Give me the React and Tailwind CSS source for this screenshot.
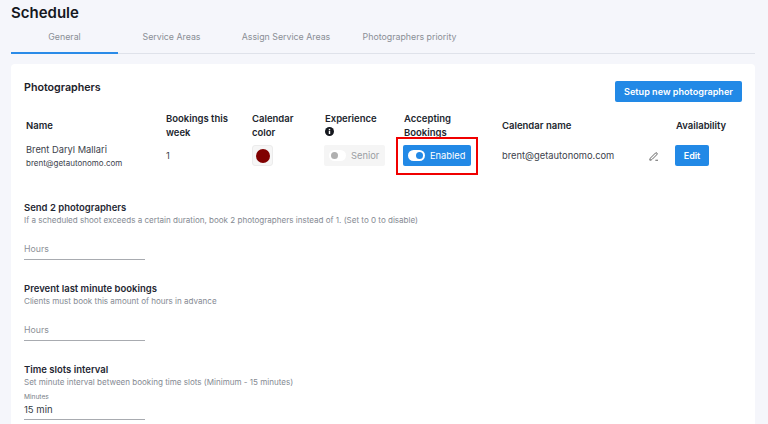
import React from 'react';

const tabs = ['General', 'Service Areas', 'Assign Service Areas', 'Photographers priority'];

const Field = ({ title, help, placeholder, label, value }) => (
  <div>
    <h3 className="text-[9.5px] leading-[12px] font-semibold text-[#1f2733]">{title}</h3>
    <p className="text-[8.05px] leading-[12px] text-[#858a93]">{help}</p>
    {label ? (
      <div className="mt-[5px]">
        <p className="text-[6.6px] leading-[9px] text-[#777c85]">{label}</p>
        <div className="w-[121px] h-[18px] border-b border-[#a8abb0] text-[9.5px] leading-[16px] text-[#333a45]">{value}</div>
      </div>
    ) : (
      <div className="mt-[10px] w-[121px] h-[24px] pt-[3px] border-b border-[#a8abb0] text-[8.75px] leading-[20px] text-[#8d9198]">{placeholder}</div>
    )}
  </div>
);

export default function App() {
  return (
    <div className="h-[424px] overflow-hidden bg-[#f5f6fb] pl-[11px] pr-[13px] font-['Inter',sans-serif]">
      <h1 className="pt-[3px] text-[15px] leading-[19px] font-semibold text-[#15181e]">Schedule</h1>
      <div className="flex h-[31px] mt-[1px] border-b border-[#dfe2ea]">
        {tabs.map((tab, i) => (
          <div
            key={tab}
            className={`-mb-[1px] pt-[6px] text-center text-[8.8px] leading-[15px] whitespace-nowrap text-[#8a8e96] ${i === 0 ? 'w-[107px] border-b-2 border-[#2a8be8]' : ''} ${i === 1 ? 'w-[107px]' : ''} ${i === 2 ? 'w-[122px]' : ''} ${i === 3 ? 'w-[125px]' : ''}`}
          >
            {tab}
          </div>
        ))}
      </div>

      <div className="mt-[10px] bg-white rounded-t-[4px] h-[400px] pl-[13px] pr-[13px]">
        <div className="flex items-start justify-between pt-[17px] h-[48px]">
          <h2 className="mt-[1px] text-[10.7px] leading-[12px] font-semibold text-[#1c2129]">Photographers</h2>
          <button className="bg-[#2289e6] text-white text-[9.1px] font-semibold rounded-[2px] w-[127px] h-[21px]">Setup new photographer</button>
        </div>

        <div className="flex items-center pl-[2px] text-[9.5px] leading-[13.3px] font-semibold text-[#22262e] h-[27px]">
          <div className="w-[140px]">Name</div>
          <div className="w-[86px]">Bookings this<br />week</div>
          <div className="w-[73px]">Calendar<br />color</div>
          <div className="w-[79px]">
            Experience<br />
            <svg viewBox="0 0 10 10" className="inline w-[9px] h-[9px] -mt-[2px]">
              <circle cx="5" cy="5" r="5" fill="#15181e" />
              <rect x="4.2" y="4.2" width="1.6" height="3.6" fill="#fff" />
              <rect x="4.2" y="2.1" width="1.6" height="1.4" fill="#fff" />
            </svg>
          </div>
          <div className="w-[98px]">Accepting<br />Bookings</div>
          <div className="w-[174px]">Calendar name</div>
          <div>Availability</div>
        </div>

        <div className="flex items-center pl-[2px] h-[33px] text-[9.33px] text-[#3c424c]">
          <div className="w-[140px]">
            <p className="text-[9.3px] leading-[14px]">Brent Daryl Mallari</p>
            <p className="text-[8px] leading-[12px]">brent@getautonomo.com</p>
          </div>
          <div className="w-[86px]">1</div>
          <div className="w-[73px]">
            <div className="w-[21px] h-[21px] bg-[#f6f6f6] border border-[#ececec] rounded-[3px] flex items-center justify-center">
              <span className="w-[14px] h-[14px] rounded-full bg-[#800000]" />
            </div>
          </div>
          <div className="w-[79px]">
            <div className="w-[61px] h-[21px] -ml-[1px] bg-[#f5f5f5] rounded-[2px] flex items-center pl-[5px] gap-[5px] text-[#9a9da3]">
              <span className="w-[17px] h-[11px] bg-white rounded-full flex items-center pl-[2px]">
                <span className="w-[7px] h-[7px] rounded-full bg-[#b0b0b0]" />
              </span>
              Senior
            </div>
          </div>
          <div className="w-[98px]">
            <div className="relative w-[68px] h-[21px] -ml-[1px] bg-[#2289e6] rounded-[2px] flex items-center pl-[5px] gap-[5px] text-white">
              <span className="w-[17px] h-[11px] bg-white rounded-full flex items-center justify-end pr-[2px]">
                <span className="w-[7px] h-[7px] rounded-full bg-[#2289e6]" />
              </span>
              Enabled
              <span className="absolute -left-[7px] -top-[8px] w-[82px] h-[38px] border-2 border-[#f00000]" />
            </div>
          </div>
          <div className="w-[146px]">brent@getautonomo.com</div>
          <div className="w-[28px] pt-[2px] pl-[1px]">
            <svg viewBox="0 0 24 24" fill="none" stroke="#555" strokeWidth="2.4" strokeLinecap="round" strokeLinejoin="round" className="w-[9px] h-[9px]">
              <path d="M21.174 6.812a1 1 0 0 0-3.986-3.987L3.842 16.174a2 2 0 0 0-.5.83l-1.321 4.352a.5.5 0 0 0 .623.622l4.353-1.32a2 2 0 0 0 .83-.497z" />
              <path d="M18 22h5" />
            </svg>
          </div>
          <button className="w-[34px] h-[21px] -ml-[1px] bg-[#2289e6] text-white text-[9px] font-semibold rounded-[2px]">Edit</button>
        </div>

        <div className="mt-[30px] flex flex-col gap-[23px]">
          <Field title="Send 2 photographers" help="If a scheduled shoot exceeds a certain duration, book 2 photographers instead of 1. (Set to 0 to disable)" placeholder="Hours" />
          <Field title="Prevent last minute bookings" help="Clients must book this amount of hours in advance" placeholder="Hours" />
          <Field title="Time slots interval" help="Set minute interval between booking time slots (Minimum - 15 minutes)" label="Minutes" value="15 min" />
        </div>
      </div>
    </div>
  );
}
